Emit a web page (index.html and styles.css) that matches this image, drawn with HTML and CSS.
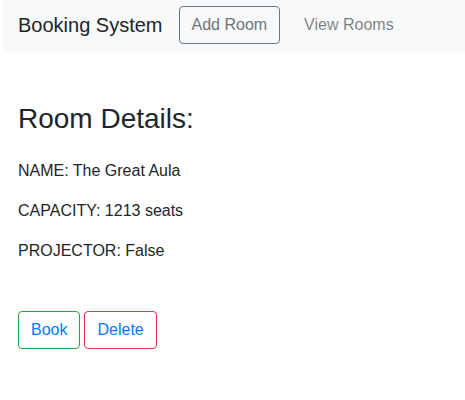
FILE: index.html
```html
<!DOCTYPE html>
<html>
<head>
<meta charset="utf-8">
<link rel="stylesheet" href="styles.css">
</head>
<body>
<nav class="navbar">
  <span class="brand">Booking System</span>
  <a class="btn btn-nav">Add Room</a>
  <a class="nav-link">View Rooms</a>
</nav>
<main class="content">
  <h3 class="title">Room Details:</h3>
  <p class="line">NAME: The Great Aula</p>
  <p class="line">CAPACITY: 1213 seats</p>
  <p class="line">PROJECTOR: False</p>
  <div class="actions">
    <a class="btn btn-book">Book</a>
    <a class="btn btn-delete">Delete</a>
  </div>
</main>
</body>
</html>
```
FILE: styles.css
```css
* { box-sizing: border-box; }
body {
  margin: 0;
  font-family: "Liberation Sans", Arial, sans-serif;
  font-size: 16px;
  line-height: 1.5;
  color: #212529;
  background: #fff;
}
.navbar {
  margin-left: 3px;
  height: 53px;
  background: #f8f9fa;
  display: flex;
  align-items: flex-start;
  padding: 6px 15px 0;
}
.brand {
  font-size: 20px;
  line-height: 30px;
  margin-top: 4px;
  color: #212529;
  margin-right: 16px;
}
.btn {
  display: inline-block;
  padding: 6px 12px;
  font-size: 16px;
  line-height: 24px;
  border: 1px solid transparent;
  border-radius: 4px;
  text-align: center;
}
.btn-nav {
  border-color: #6c757d;
  color: #6c757d;
}
.nav-link {
  color: rgba(0,0,0,.5);
  padding: 7px 0;
  margin-left: 24px;
  line-height: 24px;
}
.content {
  padding: 0 18px;
}
.title {
  font-size: 28px;
  font-weight: 400;
  line-height: 1.2;
  margin: 49px 0 23px;
}
.line {
  margin: 0 0 16px;
}
.actions {
  margin-top: 48px;
  display: flex;
  gap: 4px;
}
.btn-book {
  border-color: #28a745;
  color: #007bff;
}
.btn-delete {
  border-color: #dc3545;
  color: #007bff;
}
```
